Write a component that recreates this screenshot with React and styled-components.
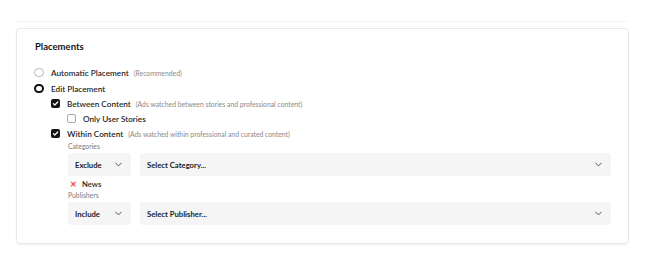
import React from 'react';
import styled, { createGlobalStyle } from 'styled-components';

const GlobalStyle = createGlobalStyle`
  html, body {
    margin: 0;
    padding: 0;
    background: #ffffff;
    font-family: Lato, 'Open Sans', sans-serif;
    color: #1f1f1f;
  }
`;

const Page = styled.div`
  width: 650px;
  height: 273px;
  padding: 0 21px 0 16px;
  box-sizing: border-box;
`;

const PrevEdge = styled.div`
  height: 22px;
  margin: 0 1px 0 -2px;
  border-bottom: 1px solid #f4f4f4;
  box-sizing: border-box;
`;

const Card = styled.section`
  margin-top: 6px;
  border: 1px solid #e9e9e9;
  border-radius: 4px;
  box-shadow: 0 1px 2px rgba(0, 0, 0, 0.06);
  padding: 12px 17px 16px 17px;
  height: 216px;
  box-sizing: border-box;
`;

const Title = styled.h2`
  margin: 0 0 12px 1px;
  font-size: 9.5px;
  line-height: 12px;
  font-weight: 700;
  color: #151515;
`;

const Row = styled.label`
  display: flex;
  align-items: center;
  height: 15px;
  margin-left: ${(p) => p.$indent || 0}px;
  margin-top: ${(p) => p.$gap || 0}px;
  font-size: 8.2px;
  font-weight: 600;
  color: #1f1f1f;
`;

const Radio = styled.span`
  width: 9.5px;
  height: 9.5px;
  border-radius: 50%;
  box-sizing: border-box;
  border: ${(p) => (p.$on ? '2.6px solid #111' : '1px solid #b5b5b5')};
  margin-right: 7.5px;
  flex-shrink: 0;
`;

const Box = styled.span`
  width: 9px;
  height: 9px;
  border-radius: 2px;
  box-sizing: border-box;
  border: ${(p) => (p.$on ? 'none' : '1px solid #a9a9a9')};
  background: ${(p) => (p.$on ? '#151515' : '#fff')};
  margin-right: 7px;
  flex-shrink: 0;
  display: flex;
  align-items: center;
  justify-content: center;
`;

const Hint = styled.span`
  margin-left: 5px;
  font-size: 6.8px;
  font-weight: 400;
  color: #8a8a8a;
`;

const Section = styled.div`
  margin-left: 34px;
  display: flex;
  flex-direction: column;
`;

const FieldLabel = styled.div`
  font-size: 6.8px;
  line-height: 9px;
  color: #7a7a7a;
  margin-top: ${(p) => p.$top || 0}px;
  margin-bottom: 2px;
`;

const SelectRow = styled.div`
  display: flex;
  gap: 9px;
`;

const Select = styled.div`
  display: flex;
  align-items: center;
  justify-content: space-between;
  height: 23px;
  box-sizing: border-box;
  padding: 0 9px 0 7px;
  border-radius: 3px;
  background: #f5f5f5;
  font-size: 7.7px;
  font-weight: 700;
  color: #1c1c1c;
  width: ${(p) => (p.$small ? '63px' : 'auto')};
  flex: ${(p) => (p.$small ? '0 0 auto' : '1')};
`;

const Tag = styled.div`
  display: flex;
  align-items: center;
  height: 12px;
  margin-top: 2px;
  padding-left: 2px;
  font-size: 7.7px;
  font-weight: 600;
  color: #1f1f1f;
`;

const Remove = styled.span`
  color: #e5484d;
  font-size: 8px;
  margin-right: 5px;
`;

const Check = () => (
  <svg width="7" height="7" viewBox="0 0 10 10">
    <path d="M2 5.2l2 2L8.2 2.8" fill="none" stroke="#fff" strokeWidth="1.8" strokeLinecap="round" strokeLinejoin="round" />
  </svg>
);

const Chevron = () => (
  <svg width="7" height="5" viewBox="0 0 10 6">
    <path d="M1 1l4 4 4-4" fill="none" stroke="#444" strokeWidth="1.3" strokeLinecap="round" strokeLinejoin="round" />
  </svg>
);

const App = () => {
  return (
    <Page>
      <GlobalStyle />
      <PrevEdge />
      <Card>
        <Title>Placements</Title>
        <Row>
          <Radio />
          Automatic Placement
          <Hint>(Recommended)</Hint>
        </Row>
        <Row $gap={1}>
          <Radio $on />
          Edit Placement
        </Row>
        <Row $indent={17}>
          <Box $on>
            <Check />
          </Box>
          Between Content
          <Hint>(Ads watched between stories and professional content)</Hint>
        </Row>
        <Row $indent={33}>
          <Box />
          Only User Stories
        </Row>
        <Row $indent={17}>
          <Box $on>
            <Check />
          </Box>
          Within Content
          <Hint>(Ads watched within professional and curated content)</Hint>
        </Row>
        <Section>
          <FieldLabel $top={1}>Categories</FieldLabel>
          <SelectRow>
            <Select $small>
              Exclude
              <Chevron />
            </Select>
            <Select>
              Select Category...
              <Chevron />
            </Select>
          </SelectRow>
          <Tag>
            <Remove>✕</Remove>
            News
          </Tag>
          <FieldLabel $top={1}>Publishers</FieldLabel>
          <SelectRow>
            <Select $small>
              Include
              <Chevron />
            </Select>
            <Select>
              Select Publisher...
              <Chevron />
            </Select>
          </SelectRow>
        </Section>
      </Card>
    </Page>
  );
};

export default App;
